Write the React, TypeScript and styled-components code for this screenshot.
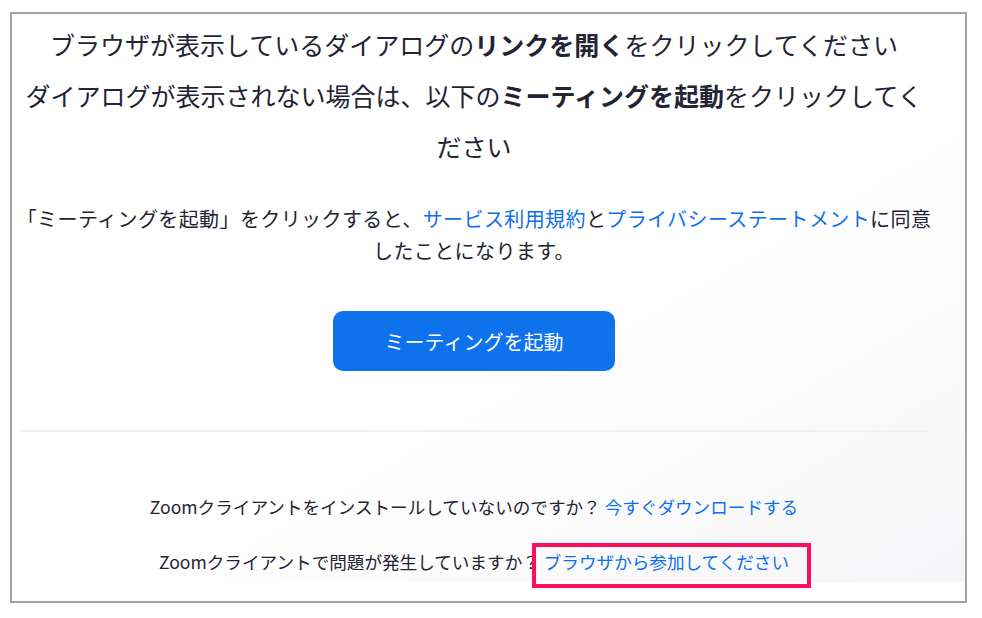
import React from 'react';
import styled, { createGlobalStyle } from 'styled-components';

const GlobalStyle = createGlobalStyle`
  html, body {
    margin: 0;
    padding: 0;
    background: #ffffff;
  }
  body {
    font-family: "Noto Sans CJK JP", "Noto Sans", sans-serif;
    color: #232333;
  }
`;

const Frame = styled.div`
  margin: 12px 0 0 10px;
  width: 957px;
  height: 591px;
  box-sizing: border-box;
  border: 2px solid #a3a3a3;
  background: #ffffff;
  display: flex;
  flex-direction: column;
`;

const Body = styled.div`
  flex: 1;
  display: flex;
  flex-direction: column;
  align-items: center;
  padding: 5px 37px 0 8px;
  background: linear-gradient(150deg, #ffffff 55%, #f5f5f7 100%);
`;

const BottomStrip = styled.div`
  height: 19px;
  background: #ffffff;
`;

const Heading = styled.p`
  margin: 0;
  width: 908px;
  font-size: 25px;
  line-height: 51px;
  text-align: center;
  font-weight: 400;
`;

const Strong = styled.b`
  font-weight: 700;
`;

const Notice = styled.p`
  margin: 31px 0 0;
  flex-shrink: 0;
  width: 918px;
  font-size: 20px;
  letter-spacing: 0.4px;
  line-height: 32px;
  text-align: center;
`;

const Link = styled.a<{ $boxed?: boolean }>`
  color: #0e71eb;
  text-decoration: none;
  cursor: pointer;
  position: relative;

  ${({ $boxed }) =>
    $boxed &&
    `
    &::after {
      content: "";
      position: absolute;
      left: -12px;
      right: -22px;
      top: -6px;
      bottom: -14px;
      border: 4px solid #fb0f5c;
      pointer-events: none;
    }
  `}
`;

const LaunchButton = styled.button`
  margin-top: 44px;
  width: 282px;
  height: 60px;
  border: none;
  border-radius: 10px;
  background: #0e72ed;
  color: #ffffff;
  font-family: "Noto Sans CJK JP", "Noto Sans", sans-serif;
  font-size: 20px;
  cursor: pointer;
`;

const Divider = styled.hr`
  align-self: stretch;
  margin: 59px 0 0;
  border: none;
  border-top: 2px solid #efeff4;
`;

const Footer = styled.div`
  margin-top: 61px;
  display: flex;
  flex-direction: column;
  align-items: center;
  gap: 28px;
`;

const FooterLine = styled.p`
  margin: 0;
  font-size: 17.6px;
  line-height: 27px;
  text-align: center;
  white-space: nowrap;
`;

export default function App() {
  return (
    <>
      <GlobalStyle />
      <Frame>
        <Body>
          <Heading>
            ブラウザが表示しているダイアログの<Strong>リンクを開く</Strong>をクリックしてください
          </Heading>
          <Heading>
            ダイアログが表示されない場合は、以下の<Strong>ミーティングを起動</Strong>をクリックしてください
          </Heading>
          <Notice>
            「ミーティングを起動」をクリックすると、<Link>サービス利用規約</Link>と<Link>プライバシーステートメント</Link>に同意したことになります。
          </Notice>
          <LaunchButton>ミーティングを起動</LaunchButton>
          <Divider />
          <Footer>
            <FooterLine>
              Zoomクライアントをインストールしていないのですか？ <Link>今すぐダウンロードする</Link>
            </FooterLine>
            <FooterLine>
              Zoomクライアントで問題が発生していますか？ <Link $boxed>ブラウザから参加してください</Link>
            </FooterLine>
          </Footer>
        </Body>
        <BottomStrip />
      </Frame>
    </>
  );
}
